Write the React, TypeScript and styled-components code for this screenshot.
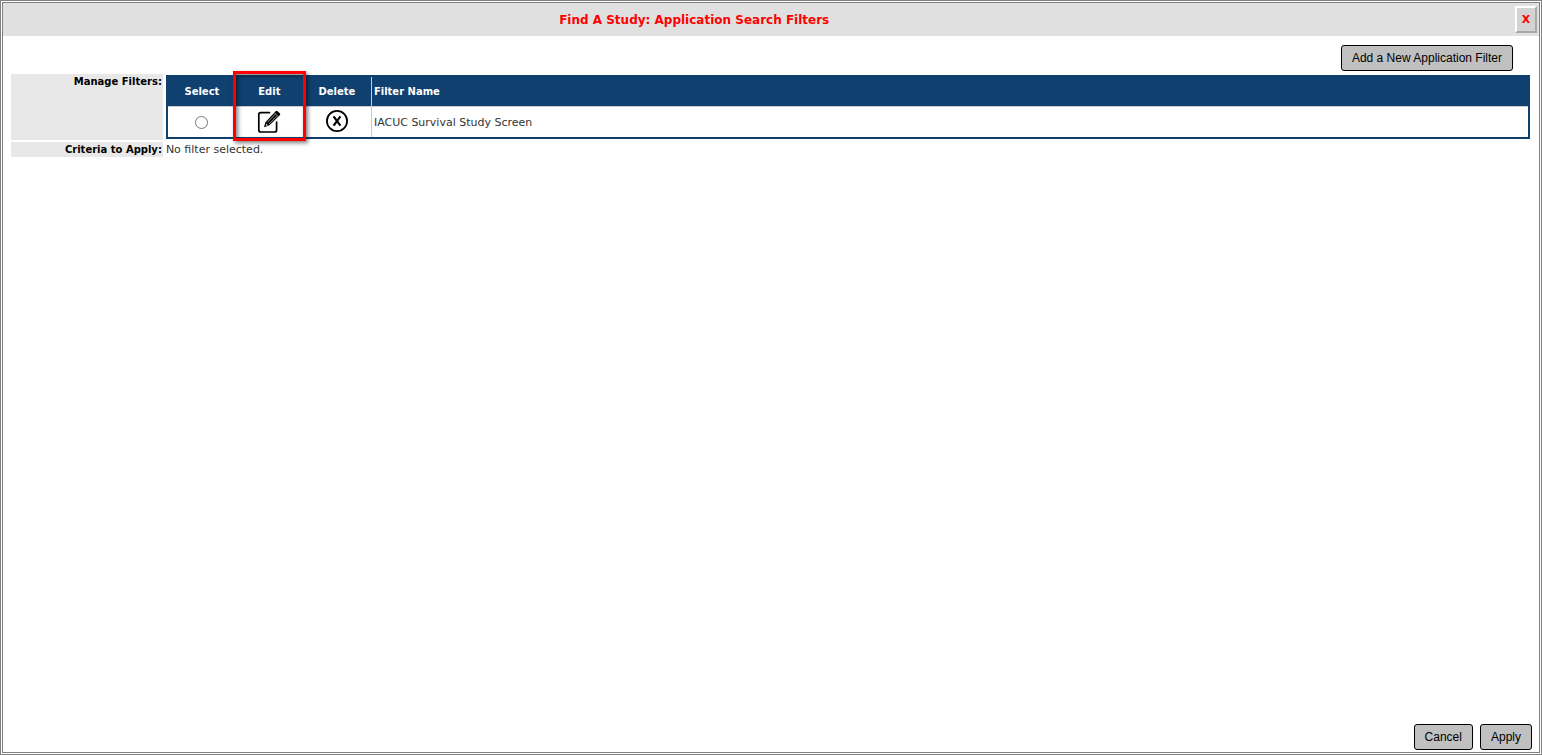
import React, { useState } from "react";
import styled, { createGlobalStyle } from "styled-components";

const GlobalStyle = createGlobalStyle`
  *, *::before, *::after { box-sizing: border-box; }
  body {
    margin: 0;
    background: #fff;
    font-family: Verdana, "DejaVu Sans", sans-serif;
    font-size: 11px;
    line-height: 15px;
    color: #333;
  }
`;

const Dialog = styled.div`
  display: flex;
  flex-direction: column;
  min-height: 100vh;
  border: 3px double #808080;
`;

const TitleBar = styled.header`
  display: flex;
  align-items: center;
  height: 33px;
  background: #e0e0e0;
`;

const Title = styled.h1`
  width: 90%;
  margin: 0;
  font-size: 12px;
  line-height: 16px;
  font-weight: bold;
  text-align: center;
  color: #f00;
`;

const CloseCell = styled.div`
  display: flex;
  justify-content: flex-end;
  width: 10%;
  padding-right: 2px;
`;

const CloseButton = styled.button`
  width: 22px;
  height: 27px;
  padding: 0;
  border: 2px solid;
  border-color: #fff #a8a8a8 #a8a8a8 #fff;
  background: #d3d3d3;
  color: #f00;
  font: bold 11px/15px Verdana, "DejaVu Sans", sans-serif;
`;

const Toolbar = styled.div`
  display: flex;
  justify-content: flex-end;
  padding: 9px 26px 3px 8px;
`;

const Button = styled.button`
  height: 26px;
  padding: 0 10px;
  border: 1px solid #000;
  border-radius: 3px;
  background: #c0c0c0;
  color: #000;
  font: 12px/16px Arial, "Liberation Sans", sans-serif;
  white-space: nowrap;
`;

const Content = styled.main`
  display: flex;
  flex: 1;
  flex-direction: column;
  gap: 2px;
  padding: 0 9px 0 8px;
`;

const FormRow = styled.section`
  display: flex;
  gap: 3px;
`;

const FormLabel = styled.h2`
  flex: 0 0 10%;
  margin: 0;
  padding-right: 1px;
  background: #e8e8e8;
  color: #000;
  font-size: 10px;
  line-height: 15px;
  font-weight: bold;
  text-align: right;
  white-space: nowrap;
`;

const FormValue = styled.div<{ $framed?: boolean }>`
  flex: 1;
  min-width: 0;
  padding: ${(p) => (p.$framed ? "1px 0" : "0")};
`;

const FilterTable = styled.table`
  width: 100%;
  table-layout: fixed;
  border: 2px solid #104070;
  border-spacing: 0;
`;

const HeadCell = styled.th<{ $width?: number }>`
  position: relative;
  width: ${(p) => (p.$width ? `${p.$width}px` : "auto")};
  height: 30px;
  padding: ${(p) => (p.$width ? "0" : "0 2px")};
  border-bottom: 1px solid #ccc;
  border-left: ${(p) => (p.$width ? "0" : "1px solid #ccc")};
  background: #104070;
  color: #fff;
  font-size: 10px;
  line-height: 15px;
  text-align: ${(p) => (p.$width ? "center" : "left")};
`;

const Cell = styled.td<{ $wide?: boolean }>`
  height: 30px;
  padding: ${(p) => (p.$wide ? "0 2px" : "0")};
  border-left: ${(p) => (p.$wide ? "1px solid #ccc" : "0")};
  text-align: ${(p) => (p.$wide ? "left" : "center")};
`;

const Highlight = styled.span`
  position: absolute;
  z-index: 1;
  top: -6px;
  left: -3px;
  right: -3px;
  height: 70px;
  border: 3px solid #f00;
  box-shadow: 2px 2px 4px rgba(0, 0, 0, 0.5), inset 2px 2px 4px rgba(0, 0, 0, 0.5);
  pointer-events: none;
`;

const Radio = styled.input`
  display: block;
  width: 13px;
  height: 13px;
  margin: 0 auto;
`;

const IconButton = styled.button`
  display: block;
  width: 24px;
  height: 24px;
  margin: 0 auto 2px;
  padding: 0;
  border: 0;
  background: none;
  color: #000;

  svg { display: block; }
`;

const Footer = styled.footer`
  display: flex;
  justify-content: flex-end;
  gap: 7px;
  padding: 0 7px 2px;
`;

const EditIcon = () => (
  <svg width="24" height="24" viewBox="0 0 24 24" fill="none" stroke="currentColor" aria-hidden="true">
    <path d="M12.5 3.7H3.8Q1.8 3.7 1.8 5.7V21Q1.8 23 3.8 23H17.6Q19.6 23 19.6 21V13" strokeWidth="1.7" strokeLinecap="round" />
    <path d="M7 18.2L8.4 13.2L18.6 2.2Q19.6 1.2 20.6 2.2L22.8 4.2Q23.8 5.2 22.8 6.2L12.2 16.6Z" fill="currentColor" stroke="none" />
    <path d="M10.3 13.4L18.2 5.2M12 15L19.8 7" stroke="#aaa" strokeWidth="0.9" />
    <path d="M17.4 3.9L21.2 7.5" stroke="#ddd" strokeWidth="0.7" />
    <path d="M9.1 14.4L11.2 16.3L8.9 16.9Z" fill="#ccc" stroke="none" />
  </svg>
);

const DeleteIcon = () => (
  <svg width="24" height="24" viewBox="0 0 24 24" fill="none" stroke="currentColor" aria-hidden="true">
    <circle cx="12" cy="12" r="10.1" strokeWidth="1.8" />
    <path d="M8.6 7.4L15.4 16.6M15.4 7.4L8.6 16.6" strokeWidth="2.2" />
  </svg>
);

const filters = ["IACUC Survival Study Screen"];

export default function App() {
  const [selected, setSelected] = useState<string | null>(null);

  return (
    <>
      <GlobalStyle />
      <Dialog role="dialog" aria-labelledby="dialog-title">
        <TitleBar>
          <Title id="dialog-title">Find A Study: Application Search Filters</Title>
          <CloseCell>
            <CloseButton type="button">X</CloseButton>
          </CloseCell>
        </TitleBar>
        <Toolbar>
          <Button type="button">Add a New Application Filter</Button>
        </Toolbar>
        <Content>
          <FormRow>
            <FormLabel id="manage-label">Manage Filters:</FormLabel>
            <FormValue $framed>
              <FilterTable aria-labelledby="manage-label">
                <thead>
                  <tr>
                    <HeadCell scope="col" $width={68}>Select</HeadCell>
                    <HeadCell scope="col" $width={67}>
                      Edit
                      <Highlight />
                    </HeadCell>
                    <HeadCell scope="col" $width={68}>Delete</HeadCell>
                    <HeadCell scope="col">Filter Name</HeadCell>
                  </tr>
                </thead>
                <tbody>
                  {filters.map((name, i) => (
                    <tr key={name}>
                      <Cell>
                        <Radio
                          type="radio"
                          name="filter"
                          aria-labelledby={`filter-${i}`}
                          checked={selected === name}
                          onChange={() => setSelected(name)}
                        />
                      </Cell>
                      <Cell>
                        <IconButton type="button" aria-label="Edit"><EditIcon /></IconButton>
                      </Cell>
                      <Cell>
                        <IconButton type="button" aria-label="Delete"><DeleteIcon /></IconButton>
                      </Cell>
                      <Cell $wide id={`filter-${i}`}>{name}</Cell>
                    </tr>
                  ))}
                </tbody>
              </FilterTable>
            </FormValue>
          </FormRow>
          <FormRow>
            <FormLabel>Criteria to Apply:</FormLabel>
            <FormValue>{selected ?? "No filter selected."}</FormValue>
          </FormRow>
        </Content>
        <Footer>
          <Button type="button">Cancel</Button>
          <Button type="button">Apply</Button>
        </Footer>
      </Dialog>
    </>
  );
}
